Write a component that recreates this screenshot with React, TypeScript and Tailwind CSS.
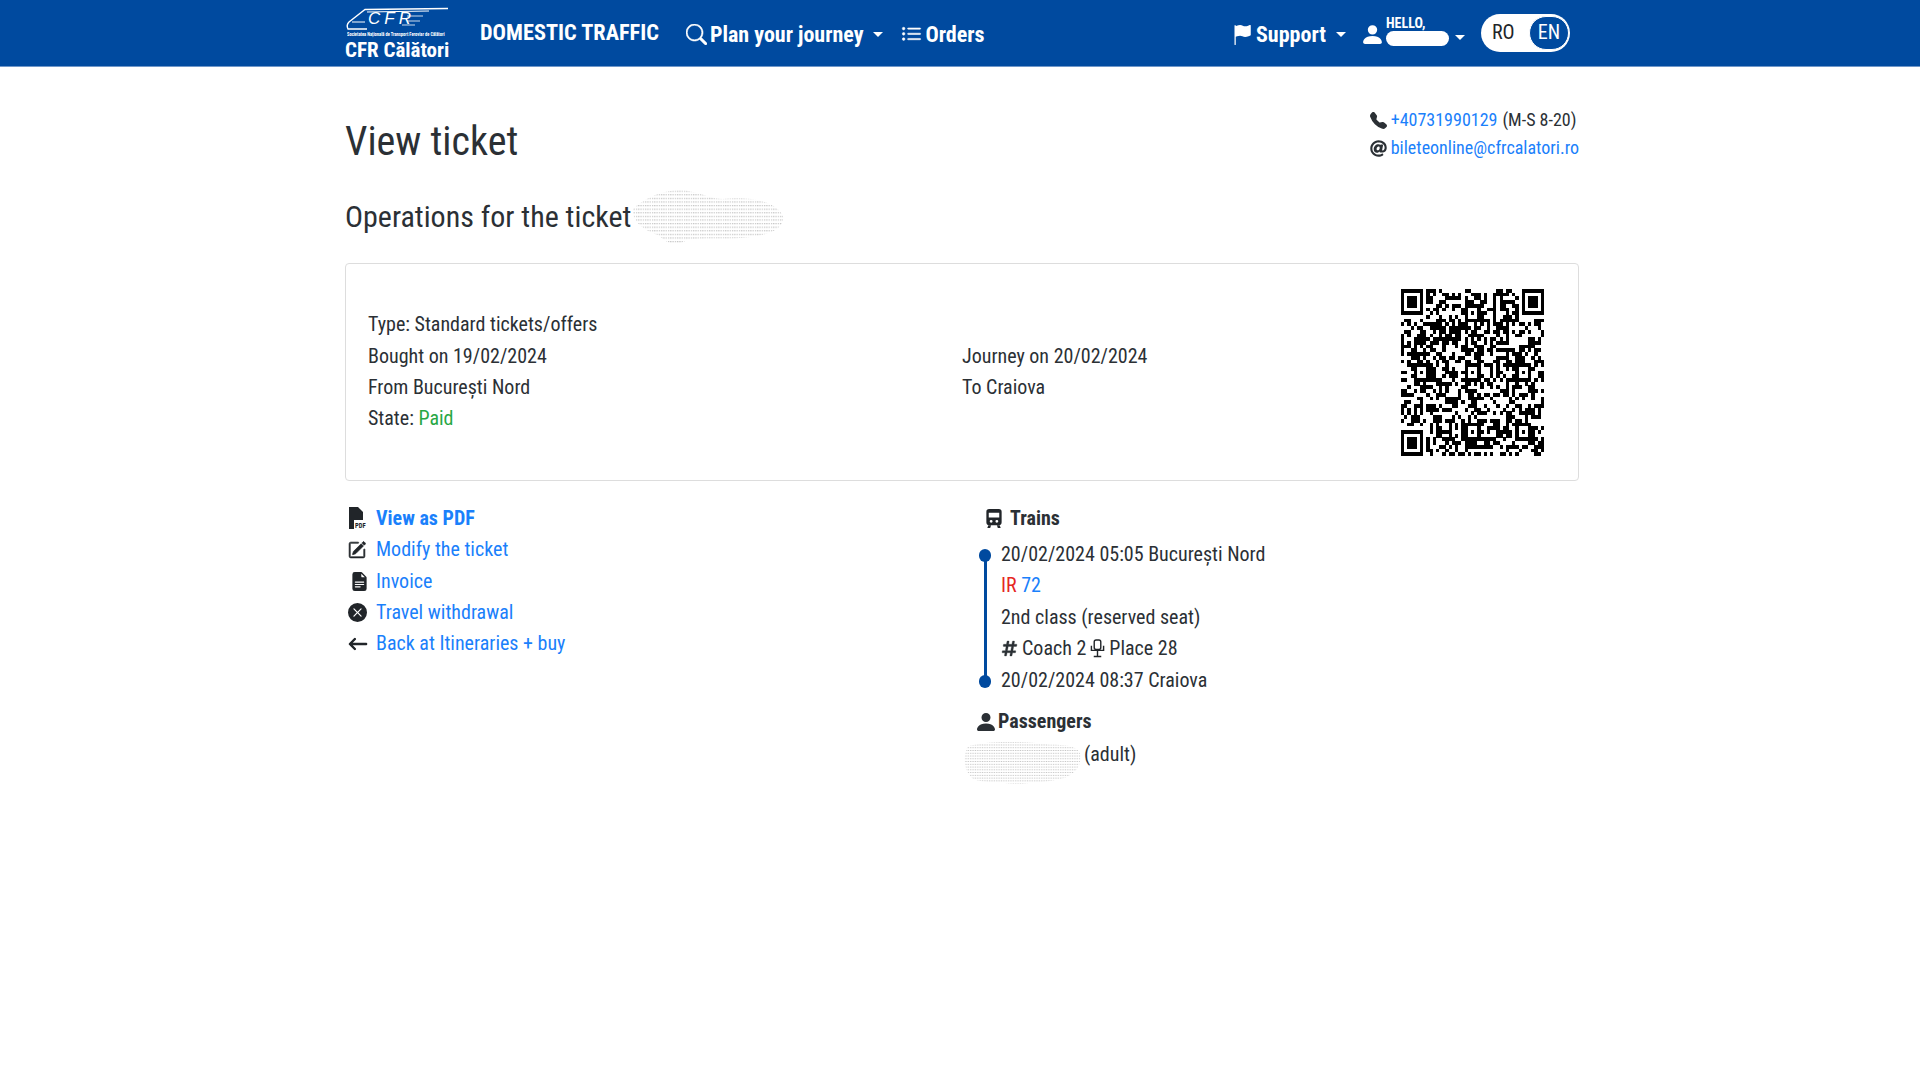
import type { ReactNode } from "react";
import {
  BsArrowLeft,
  BsFileEarmarkTextFill,
  BsFlagFill,
  BsListUl,
  BsPencilSquare,
  BsPersonFill,
  BsSearch,
  BsTelephoneFill,
  BsXCircleFill,
} from "react-icons/bs";
import { FaAt, FaHashtag } from "react-icons/fa";

const QR_SIZE = 45;

function buildQr() {
  const cells: boolean[][] = [];
  let seed = 72193;
  for (let y = 0; y < QR_SIZE; y++) {
    const row: boolean[] = [];
    for (let x = 0; x < QR_SIZE; x++) {
      seed = (seed * 1103515245 + 12345) & 0x7fffffff;
      row.push((seed >> 16) % 100 < 50);
    }
    cells.push(row);
  }
  const finder = (ox: number, oy: number) => {
    for (let y = -1; y < 8; y++) {
      for (let x = -1; x < 8; x++) {
        const cx = ox + x;
        const cy = oy + y;
        if (cx < 0 || cy < 0 || cx >= QR_SIZE || cy >= QR_SIZE) continue;
        const ring = x >= 0 && x <= 6 && y >= 0 && y <= 6 && (x === 0 || x === 6 || y === 0 || y === 6);
        const core = x >= 2 && x <= 4 && y >= 2 && y <= 4;
        cells[cy][cx] = ring || core;
      }
    }
  };
  finder(0, 0);
  finder(QR_SIZE - 7, 0);
  finder(0, QR_SIZE - 7);
  const centers = [6, 22, 38];
  centers.forEach((ay) =>
    centers.forEach((ax) => {
      if ((ax === 6 && ay === 6) || (ax === 38 && ay === 6) || (ax === 6 && ay === 38)) return;
      for (let y = -2; y <= 2; y++) {
        for (let x = -2; x <= 2; x++) {
          cells[ay + y][ax + x] = Math.max(Math.abs(x), Math.abs(y)) !== 1;
        }
      }
    }),
  );
  return cells;
}

function QrCode() {
  const cells = buildQr();
  return (
    <svg viewBox={`0 0 ${QR_SIZE} ${QR_SIZE}`} preserveAspectRatio="none" className="h-[167px] w-[143px]" shapeRendering="crispEdges">
      {cells.map((row, y) =>
        row.map((on, x) => (on ? <rect key={`${x}-${y}`} x={x} y={y} width="1.02" height="1.02" fill="#000" /> : null)),
      )}
    </svg>
  );
}

// the greyed out scribbles that hide personal data
function Scribble({ id, className, d }: { id: string; className: string; d: string }) {
  return (
    <svg viewBox="0 0 150 50" preserveAspectRatio="none" className={className}>
      <defs>
        <pattern id={id} width="2.2" height="3" patternUnits="userSpaceOnUse">
          <rect width="1.2" height="1" fill="#c4c4c4" />
        </pattern>
      </defs>
      <path d={d} fill={`url(#${id})`} />
    </svg>
  );
}

function Logo() {
  return (
    <div className="relative h-[66px] w-[106px] text-white">
      <svg viewBox="0 0 106 34" className="absolute left-0 top-0 h-[34px] w-[106px]" fill="none" stroke="#fff">
        <path d="M103 8.5 L20 9.5 L4 22 C2 24 2 27 3 29 L22 29" strokeWidth="1.4" />
        <path d="M22 12 L84 11 M7 22 L20 22" strokeWidth="1" />
        <path d="M62 16 L78 16 M62 21 L75 21 M57 25 L70 25" strokeWidth="1" strokeOpacity="0.8" />
      </svg>
      <span className="absolute left-[23px] top-[11px] text-[17px] italic leading-[16px] tracking-[4px] [font-family:'Liberation_Sans',sans-serif] [font-stretch:100%]">
        CFR
      </span>
      <span className="absolute left-[2px] top-[32px] w-[102px] truncate text-[4.5px] font-bold leading-[6px]">
        Societatea Națională de Transport Feroviar de Călători
      </span>
      <span className="absolute left-0 top-[39px] whitespace-nowrap text-[21px] font-bold leading-[22px]">CFR Călători</span>
    </div>
  );
}

function Caret() {
  return <span className="ml-[10px] h-0 w-0 border-x-[5px] border-t-[5px] border-x-transparent border-t-white" />;
}

function PdfIcon() {
  return (
    <svg viewBox="0 0 20 24" className="h-[24px] w-[20px]">
      <path d="M1 0 H10 L15 5 V13 H6 V22 H1 Z" fill="#212529" />
      <text x="7" y="21" fontSize="6.6" fontWeight="700" fill="#212529" fontFamily="Roboto, sans-serif">
        PDF
      </text>
    </svg>
  );
}

function TrainIcon() {
  return (
    <svg viewBox="0 0 18 22" className="mr-[7px] h-[21px] w-[18px]" fill="#212529">
      <path
        fillRule="evenodd"
        d="M4 1 H14 C16 1 17 2 17 4 V15 C17 17 16 18 14 18 H4 C2 18 1 17 1 15 V4 C1 2 2 1 4 1 Z M3.5 5 V10 H14.5 V5 Z M6 12.5 A1.5 1.5 0 1 0 6 15.5 A1.5 1.5 0 1 0 6 12.5 Z M12 12.5 A1.5 1.5 0 1 0 12 15.5 A1.5 1.5 0 1 0 12 12.5 Z"
      />
      <path d="M3 18 H6 L5 21 H2 Z M12 18 H15 L16 21 H13 Z" />
    </svg>
  );
}

function SeatIcon() {
  return (
    <svg viewBox="0 0 16 20" className="ml-[4px] mr-[4px] h-[19px] w-[15px]" fill="none" stroke="#212529" strokeWidth="1.5">
      <rect x="4.5" y="1" width="7" height="10" rx="2" />
      <path d="M1.5 7 V12 H14.5 V7 M8 12 V18 M4 18.5 H12" />
    </svg>
  );
}

function ActionRow({ icon, bold, children }: { icon: ReactNode; bold?: boolean; children: ReactNode }) {
  return (
    <li className="flex h-[31.3px] items-center">
      <span className="flex w-[31px] items-center justify-start pl-[3px] text-[#212529]">{icon}</span>
      <a href="#" className={`text-[#1a80fb] ${bold ? "font-bold" : ""}`}>
        {children}
      </a>
    </li>
  );
}

export default function App() {
  return (
    <div className="min-h-[1080px] bg-white text-[20px] leading-[31.4px] text-[#2b3035] [font-family:Roboto,'Liberation_Sans',sans-serif] [font-stretch:85%]">
      <header className="h-[67px] border-b border-[#6f97c9] bg-[#004a9f] text-white">
        <nav className="ml-[345px] flex h-[66px] w-[1234px] items-center">
          <Logo />
          <a href="#" className="ml-[29px] text-[22.3px] font-bold">DOMESTIC TRAFFIC</a>
          <a href="#" className="ml-[27px] mt-[3px] flex items-center text-[22px] font-bold">
            <BsSearch className="mr-[3px] stroke-[0.4] text-[21px]" />
            Plan your journey
            <Caret />
          </a>
          <a href="#" className="ml-[18px] mt-[3px] flex items-center text-[22px] font-bold">
            <BsListUl className="mr-[3px] stroke-[0.4] text-[21px]" />
            Orders
          </a>
          <div className="ml-auto mt-[3px] flex items-center">
            <a href="#" className="flex items-center text-[22px] font-bold">
              <BsFlagFill className="mr-[4px] text-[20px]" />
              Support
              <Caret />
            </a>
            <div className="ml-[14px] flex items-center">
              <BsPersonFill className="text-[25px]" />
              <div className="ml-[1px] flex w-[70px] -translate-y-[4px] flex-col">
                <span className="text-[14px] font-bold leading-[16px]">HELLO,</span>
                <span className="h-[15px] w-[63px] rounded-[8px] bg-white" />
              </div>
              <span className="-ml-[1px] mt-[6px] h-0 w-0 border-x-[5px] border-t-[5px] border-x-transparent border-t-white" />
            </div>
            <div className="-mt-[4px] ml-[16px] mr-[9px] flex h-[38px] w-[89px] items-center justify-between rounded-full bg-white pl-[11px] pr-[1px] text-[#212529]">
              <span>RO</span>
              <span className="flex h-[34px] w-[40px] items-center justify-center rounded-full border border-white bg-[#004a9f] text-white">EN</span>
            </div>
          </div>
        </nav>
      </header>

      <main className="ml-[345px] w-[1234px]">
        <div className="flex h-[103px] items-start justify-between pt-[39px]">
          <h1 className="mt-[11px] text-[40px] leading-[50px]">View ticket</h1>
          <div className="text-[18px] leading-[28px]">
            <div className="flex items-center">
              <BsTelephoneFill className="mr-[4px] text-[17px]" />
              <a href="#" className="text-[#1a80fb]">+40731990129</a>
              <span className="ml-[5px]">(M-S 8-20)</span>
            </div>
            <div className="flex items-center">
              <FaAt className="mr-[4px] text-[17px]" />
              <a href="#" className="text-[#1a80fb]">bileteonline@cfrcalatori.ro</a>
            </div>
          </div>
        </div>

        <div className="mt-[18px] flex h-[58px] items-center">
          <h2 className="text-[30px] leading-[38px]">Operations for the ticket</h2>
          <Scribble
            id="ticket-scribble"
            className="-ml-[2px] h-[60px] w-[156px]"
            d="M4 18 C20 6 42 0 60 4 C72 6 80 10 90 10 C112 8 140 10 148 24 C150 34 138 40 112 42 C90 44 72 42 56 44 C46 50 38 48 28 40 C14 36 2 28 4 18 Z"
          />
        </div>

        <section className="mt-[17px] flex h-[218px] items-center rounded-[4px] border border-[#dddddd] pl-[22px] pr-[34px]">
          <div className="grid flex-1 grid-cols-[594px_1fr]">
            <div className="col-span-2">Type: Standard tickets/offers</div>
            <div>Bought on 19/02/2024</div>
            <div>Journey on 20/02/2024</div>
            <div>From București Nord</div>
            <div>To Craiova</div>
            <div className="col-span-2">
              State: <span className="text-[#28a745]">Paid</span>
            </div>
          </div>
          <QrCode />
        </section>

        <section className="mt-[22px] grid grid-cols-[618px_1fr]">
          <ul>
            <ActionRow bold icon={<PdfIcon />}>View as PDF</ActionRow>
            <ActionRow icon={<BsPencilSquare className="stroke-[0.6] text-[18px]" />}>Modify the ticket</ActionRow>
            <ActionRow icon={<BsFileEarmarkTextFill className="ml-[2px] text-[19px]" />}>Invoice</ActionRow>
            <ActionRow icon={<BsXCircleFill className="text-[19px]" />}>Travel withdrawal</ActionRow>
            <ActionRow icon={<BsArrowLeft className="stroke-[0.9] text-[20px]" />}>Back at Itineraries + buy</ActionRow>
          </ul>

          <div>
            <div className="flex h-[31px] items-center pl-[22px] font-bold">
              <TrainIcon />
              Trains
            </div>
            <div className="relative mt-[5px] pl-[38px]">
              <span className="absolute left-[21px] top-[15px] h-[126px] w-[3px] bg-[#004a9f]" />
              <span className="absolute left-[16px] top-[10px] h-[13px] w-[12px] rounded-full bg-[#004a9f]" />
              <span className="absolute left-[16px] top-[136px] h-[13px] w-[12px] rounded-full bg-[#004a9f]" />
              <div>20/02/2024 05:05 București Nord</div>
              <div>
                <span className="text-[#e6261f]">IR</span> <span className="text-[#1a80fb]">72</span>
              </div>
              <div>2nd class (reserved seat)</div>
              <div className="flex items-center">
                <FaHashtag className="mr-[4px] stroke-[10] text-[17px]" />
                Coach 2
                <SeatIcon />
                Place 28
              </div>
              <div>20/02/2024 08:37 Craiova</div>
            </div>
            <div className="mt-[10px] flex h-[31px] items-center pl-[11px] font-bold">
              <BsPersonFill className="mr-[0px] text-[24px]" />
              Passengers
            </div>
            <div className="mt-[2px] flex h-[31px] items-start">
              <Scribble
                id="name-scribble"
                className="h-[46px] w-[118px] shrink-0"
                d="M6 8 C30 2 70 2 110 6 C130 6 146 8 149 16 C150 28 146 36 130 42 C96 50 40 50 14 44 C2 38 -1 20 6 8 Z"
              />
              <span className="ml-[3px]">(adult)</span>
            </div>
          </div>
        </section>
      </main>
    </div>
  );
}
